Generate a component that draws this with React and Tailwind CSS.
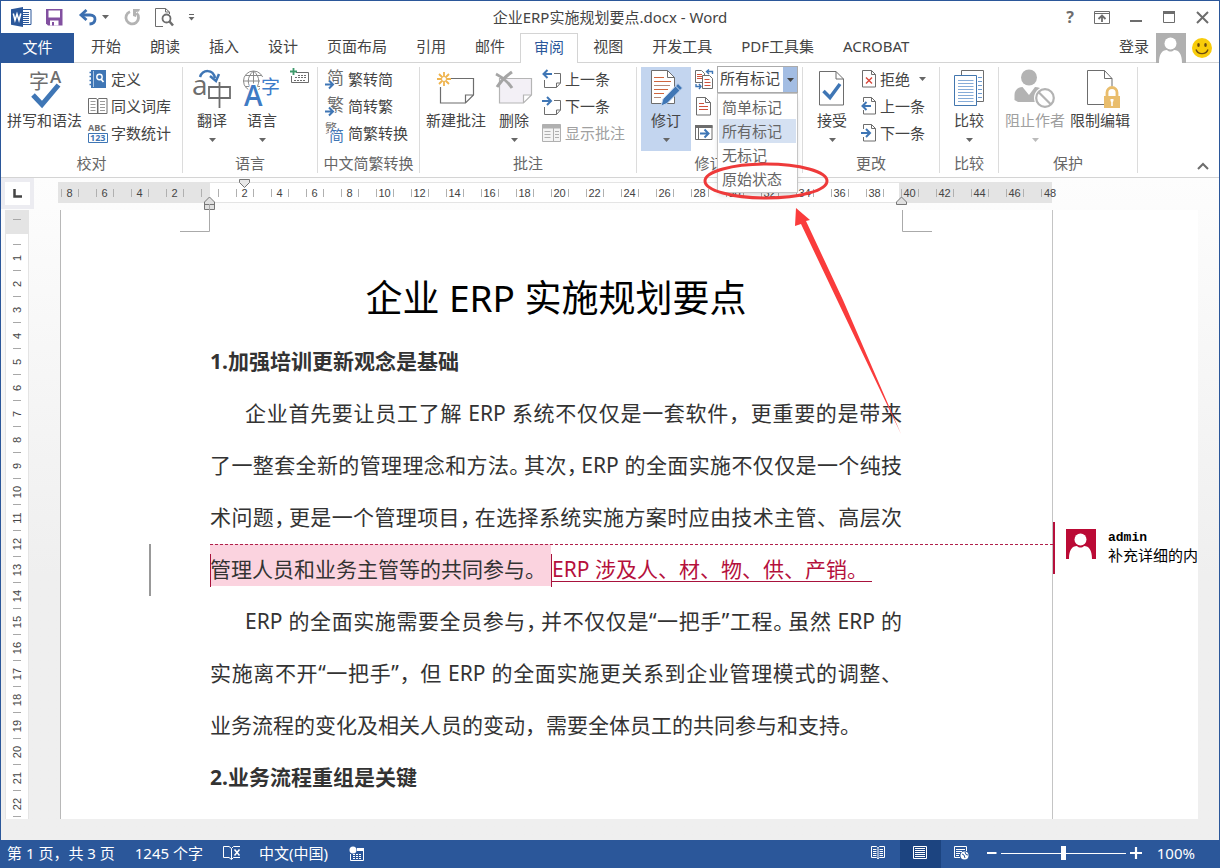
import React, { useState } from "react";

const GRAY = "#6d6d6d";
const BLUE = "#3f76b5";
const SANS = "'Noto Sans','Noto Sans CJK SC',sans-serif";

function Svg({ w, h, children, className = "" }) {
  return (
    <svg width={w} height={h} viewBox={`0 0 ${w} ${h}`} fill="none" aria-hidden="true" className={`block shrink-0 overflow-visible ${className}`}>
      {children}
    </svg>
  );
}

function Caret({ color = "#666" }) {
  return (
    <Svg w={7} h={4}>
      <path d="M0 0h7L3.5 4z" fill={color} />
    </Svg>
  );
}

/* ---------- title bar icons ---------- */

const WordLogo = () => (
  <Svg w={21} h={20}>
    <path d="M11 2.5h9v15h-9" fill="#fff" stroke="#2b579a" />
    <path d="M12 5.500h6M12 7.500h6M12 9.500h6M12 11.500h6M12 13.500h6M12 15.500h6" stroke="#2b579a" />
    <path d="M0 2.3L12 0v20L0 17.7z" fill="#2b579a" />
    <path d="M2.3 6.500L4 13.300 6 7l2 6.300 1.800-6.800" stroke="#fff" strokeWidth="1.500" />
  </Svg>
);

const SaveIcon = () => (
  <Svg w={17} h={17}>
    <path d="M0 0h16.500v16.500H2L0 14.500z" fill="#8250a0" />
    <path d="M2.500 1.500h11.500v7H2.500z" fill="#fff" />
    <path d="M4 11.500h8.500v5H4z" fill="#fff" />
    <path d="M6 13h2v3.500H6z" fill="#8250a0" />
  </Svg>
);

const UndoIcon = () => (
  <Svg w={18} h={17}>
    <path d="M2 6h9c7 0 6.500 8.500-.5 9" stroke="#3c6fb0" strokeWidth="2.800" />
    <path d="M7.500 1L2 6l5.500 5" stroke="#3c6fb0" strokeWidth="2.800" />
  </Svg>
);

const RedoIcon = () => (
  <Svg w={17} h={17}>
    <path d="M6 2.700A6.300 6.300 0 1 0 12.500 4" stroke="#b3b3b3" strokeWidth="2.800" />
    <path d="M9 0h7l-1 2.500-3 .5v5L9 7z" fill="#b3b3b3" />
  </Svg>
);

const PreviewIcon = () => (
  <Svg w={19} h={19}>
    <path d="M14.500 6V4l-4-3.500H.5v18H8M10.500.5V4h4" stroke={GRAY} />
    <circle cx="11.500" cy="10.500" r="4" stroke={GRAY} strokeWidth="1.800" />
    <path d="M14.500 13.500l3.500 4" stroke={GRAY} strokeWidth="2.500" />
  </Svg>
);

/* ---------- ribbon icons ---------- */

const SpellIcon = () => (
  <Svg w={36} h={40}>
    <text x="2" y="20" fontSize="20" fill={GRAY} fontFamily="'Noto Sans CJK SC'">字</text>
    <text x="23" y="14" fontSize="17" fontWeight="600" fill={GRAY} fontFamily="'Open Sans'">A</text>
    <path d="M6 26l9 9.500L31.500 16" stroke="#fff" strokeWidth="8" />
    <path d="M6 26l9 9.500L31.500 16" stroke={BLUE} strokeWidth="5" />
  </Svg>
);

const DefineIcon = () => (
  <Svg w={20} h={18}>
    <path d="M3 0h15v18H3z" fill={BLUE} />
    <path d="M5.500 1v16" stroke="#a9c4e4" />
    <path d="M1.500 2.500h3M1.500 6.500h3M1.500 10.500h3M1.500 14.500h3" stroke={BLUE} strokeWidth="1.500" />
    <circle cx="11.500" cy="7" r="2.700" stroke="#fff" strokeWidth="1.400" />
    <path d="M13 9l2.500 3" stroke="#fff" strokeWidth="1.800" />
  </Svg>
);

const ThesaurusIcon = () => (
  <Svg w={20} h={18}>
    <path d="M.5 1.500h7.500l1.500 1 1.500-1h8v15h-18.500z" stroke={GRAY} />
    <path d="M9.700 2.500v14" stroke={GRAY} strokeWidth="1.500" />
    <path d="M2.500 4.500h5M2.500 7.500h5M2.500 10.500h5M2.500 13.500h5M12 4.500h5M12 7.500h5M12 10.500h5M12 13.500h5" stroke="#9a9a9a" />
  </Svg>
);

const CountIcon = () => (
  <Svg w={20} h={20}>
    <text x="0" y="8" fontSize="9" fontWeight="700" fill={GRAY} fontFamily="'Open Sans'">ABC</text>
    <path d="M.5 10.500h19v9H.5z" stroke={BLUE} />
    <text x="2" y="18" fontSize="9" fontWeight="700" fill={BLUE} fontFamily="'Open Sans'">123</text>
  </Svg>
);

const TranslateIcon = () => (
  <Svg w={40} h={42}>
    <text x="0" y="27" fontSize="28" fill={GRAY} fontFamily="'Open Sans'">a</text>
    <path d="M17 19h21v11H17zM27.500 14v26" stroke={GRAY} strokeWidth="1.800" />
    <path d="M8 9c3-8 13-8 15 1" stroke={BLUE} strokeWidth="2.500" />
    <path d="M18 8l6 5 3-7" stroke={BLUE} strokeWidth="2.500" />
  </Svg>
);

const LanguageIcon = () => (
  <Svg w={38} h={40}>
    <circle cx="10.500" cy="12" r="10" stroke="#8a8a8a" />
    <path d="M.5 12h20M2.500 6.500h16M2.500 17.500h16M10.500 2v20M10.500 2c-7 6-7 14 0 20M10.500 2c7 6 7 14 0 20" stroke="#8a8a8a" />
    <path d="M17 8h21v18H17z" fill="#fff" />
    <text x="18" y="25" fontSize="19" fill="#3d7cc9" fontFamily="'Noto Sans CJK SC'">字</text>
    <text x="1" y="37" fontSize="28" fontWeight="600" fill="#3f7bc4" stroke="#fff" strokeWidth="3" paintOrder="stroke" fontFamily="'Open Sans'">A</text>
  </Svg>
);

const KeyboardIcon = () => (
  <Svg w={20} h={16}>
    <path d="M6 4.500h12.500v10H1.500V8" stroke={GRAY} />
    <path d="M4 12.500h12M5 9.500h12M8 7.500h9" stroke={GRAY} strokeDasharray="2 1" />
    <path d="M3.500 0v7M0 3.500h7" stroke="#3e9a6b" strokeWidth="1.800" />
  </Svg>
);

function HanIcon({ ch, both }) {
  return (
    <Svg w={20} h={20}>
      {both ? (
        <>
          <text x="0" y="10" fontSize="12" fill={GRAY} fontFamily="'Noto Sans CJK SC'">繁</text>
          <path d="M4 6h15v14H4z" fill="#fff" />
          <text x="4" y="18" fontSize="15" fill={BLUE} fontFamily="'Noto Sans CJK SC'">简</text>
        </>
      ) : (
        <>
          <text x="2" y="15" fontSize="17" fill={GRAY} fontFamily="'Noto Sans CJK SC'">{ch}</text>
          <path d="M0 15.500h7M4 11.500l4 4-4 4" stroke="#fff" strokeWidth="4" />
          <path d="M0 15.500h7M4 11.500l4 4-4 4" stroke={BLUE} strokeWidth="2" />
        </>
      )}
    </Svg>
  );
}

const NewCommentIcon = () => (
  <Svg w={38} h={34}>
    <path d="M14 6.500h22.500V23l-8 8H3.500V15M36 23h-7.500v8" stroke={GRAY} strokeWidth="1.200" />
    <path d="M7 0v14M0 7h14M2 2l10 10M12 2L2 12" stroke="#efb44e" strokeWidth="1.800" />
    <circle cx="7" cy="7" r="2.500" fill="#fff" stroke="#efb44e" />
  </Svg>
);

const DeleteCommentIcon = () => (
  <Svg w={38} h={34}>
    <path d="M4.500 6.500h32V23l-8 8h-24zM36.500 23h-8v8" fill="#f3f0f6" stroke="#b5b5b5" strokeWidth="1.200" />
    <path d="M1 2c6 3 12 8 16 14M17 0C11 4 6 9 2 15" stroke="#a5a5a5" strokeWidth="3" />
  </Svg>
);

function NoteArrowIcon({ next }) {
  return (
    <Svg w={20} h={20}>
      <path d="M12 4.500h6.500V14l-4 4.500H2.500V11M18.500 14h-4v4.500" stroke={GRAY} />
      <path d={next ? "M0 5h8M5 1l4 4-4 4" : "M10 5H2M5.500 1l-4 4 4 4"} stroke={BLUE} strokeWidth="2" />
    </Svg>
  );
}

const ShowCommentsIcon = () => (
  <Svg w={20} h={18}>
    <path d="M.5.5h18v17H.5z" fill="#f4f4f4" stroke="#b0b0b0" />
    <path d="M.5.5h18v4H.5z" fill="#b0b0b0" />
    <path d="M11.500 4v14M2.500 7.500h6M2.500 10.500h6M2.500 13.500h6M13 7.500h4M13 10.500h4M13 13.500h4" stroke="#b0b0b0" />
  </Svg>
);

const TrackIcon = () => (
  <Svg w={34} h={38}>
    <path d="M2.500.5h16l7 7v26h-23z" fill="#fff" stroke={GRAY} />
    <path d="M18.500.5v7h7" stroke={GRAY} />
    <path d="M5 7.500h10M5 11.500h17M5 19.500h14M5 23.500h10" stroke="#d0643c" />
    <path d="M5 15.500h16M5 27.500h7" stroke="#b58a78" />
    <path d="M12 36l2-7L29 13.500l4.500 4.500L18 33.500z" fill={BLUE} stroke="#c3d5ef" />
    <path d="M26.500 16l5 5" stroke="#c3d5ef" />
  </Svg>
);

const DisplayReviewIcon = () => (
  <Svg w={20} h={20}>
    <path d="M1.500 1.500h6l3 3v9h-9z" stroke={GRAY} />
    <path d="M3 5.500h5M3 7.500h5M3 9.500h5" stroke="#d0523c" />
    <path d="M8.500 6.500h7l3 3v10h-10z" fill="#fff" stroke={GRAY} />
    <path d="M10.500 10.500h5M10.500 13.500h6M10.500 16.500h6" stroke="#d0523c" />
    <path d="M18.500 5V2.500H13M15 .5l-2.500 2L15 5M2 15v2.500h5M5 15l2 2.500L5 20" stroke={BLUE} strokeWidth="1.400" />
  </Svg>
);

const ShowMarkupIcon = () => (
  <Svg w={20} h={20}>
    <path d="M2.500 1.500h9l5 5v12.500h-14zM11.500 1.500v5h5" stroke={GRAY} />
    <path d="M5 7.500h5M5 10.500h9M5 13.500h9" stroke="#d0523c" />
  </Svg>
);

const ReviewPaneIcon = () => (
  <Svg w={20} h={20}>
    <path d="M1.500 2.500h16.500v14H1.500z" stroke={GRAY} />
    <path d="M1 2h17.500v3H1z" fill={GRAY} />
    <path d="M4.500 5v11" stroke={GRAY} />
    <path d="M6 10.500h8M10.500 6.500l4 4-4 4" stroke={BLUE} strokeWidth="2" />
  </Svg>
);

const AcceptIcon = () => (
  <Svg w={26} h={36}>
    <path d="M.5.500h16.500l7.500 7.500v26H.5zM17 .5V8h7.500" stroke={GRAY} />
    <path d="M4.500 20l6.500 6.500L21 13" stroke={BLUE} strokeWidth="3.500" />
  </Svg>
);

const RejectIcon = () => (
  <Svg w={16} h={18}>
    <path d="M1.500.5h9l4 4V17h-13zM10.500.5v4h4" stroke={GRAY} />
    <path d="M5 7.500l6 6M11 7.500l-6 6" stroke="#d9463a" strokeWidth="1.400" />
  </Svg>
);

function DocArrowIcon({ next }) {
  return (
    <Svg w={16} h={18}>
      <path d="M2.500 5V.5h8l4 4V17h-12v-4M10.500.5v4h4" stroke={GRAY} />
      <path d={next ? "M0 9h8M5 5l4 4-4 4" : "M10 9H2M5.500 5l-4 4 4 4"} stroke={BLUE} strokeWidth="2" />
    </Svg>
  );
}

const CompareIcon = () => (
  <Svg w={32} h={38}>
    <path d="M8.500 6V.5h22V31.500h-7" stroke={GRAY} />
    <path d="M25 7.500h4M25 11.500h4M25 15.500h4M25 19.500h4M25 23.500h4M25 27.500h4" stroke="#6d9bd0" />
    <path d="M1.500 5.500H23.500v30H1.500z" fill="#fff" stroke="#4276ae" />
    <path d="M5 10.500h15.500M5 13.500h15.500M5 16.500h15.500M5 19.500h15.500M5 22.500h15.500M5 25.500h15.500M5 28.500h15.500M5 31.500h15.500" stroke="#86acd8" />
  </Svg>
);

const BlockIcon = () => (
  <Svg w={42} h={40}>
    <circle cx="15" cy="8.500" r="8" fill="#b3b3b3" />
    <path d="M.5 31v-5c0-5 4-8 8-8l6.500 8 6-8c3 0 6 1 7 3L22 33H4z" fill="#b3b3b3" />
    <circle cx="31" cy="29" r="11" fill="#fff" />
    <circle cx="31" cy="29" r="8.800" stroke="#b3b3b3" strokeWidth="2.200" />
    <path d="M24.500 23l12.500 12.500" stroke="#b3b3b3" strokeWidth="2.200" />
  </Svg>
);

const RestrictIcon = () => (
  <Svg w={34} h={38} className="ml-2">
    <path d="M17 34.500H.5V.5h17l7.500 8v8M17.500.5v8H25" stroke={GRAY} />
    <path d="M20 27v-4.500a5 5 0 0 1 10 0V27" stroke="#e9bd6c" strokeWidth="2.800" />
    <path d="M17 26h16v12H17z" fill="#e9bd6c" />
    <path d="M23.500 29h3v2l-.7 1v4h-1.600v-4l-.7-1z" fill="#fff" />
  </Svg>
);

/* ---------- ribbon parts ---------- */

function BigButton({ icon, label, caret, disabled, active, className }) {
  return (
    <button
      type="button"
      disabled={disabled}
      className={`flex h-[84px] shrink-0 flex-col items-center ${active ? "bg-[#c3d5ef]" : ""} ${disabled ? "text-[#a0a0a0]" : "text-[#444]"} ${className}`}
    >
      <span className="flex h-[43px] items-center">{icon}</span>
      <span className="whitespace-nowrap text-[15px] leading-5">{label}</span>
      {caret && (
        <span className="mt-2">
          <Caret color={disabled ? "#bbb" : "#666"} />
        </span>
      )}
    </button>
  );
}

function SmallButton({ icon, label, disabled, caret }) {
  return (
    <button
      type="button"
      disabled={disabled}
      className={`flex h-[27px] items-center gap-[3px] whitespace-nowrap text-[15px] leading-5 ${disabled ? "text-[#a0a0a0]" : "text-[#444]"}`}
    >
      {icon}
      <span>{label}</span>
      {caret && (
        <span className="ml-[6px]">
          <Caret />
        </span>
      )}
    </button>
  );
}

function Group({ label, children, className, labelClass = "" }) {
  return (
    <section aria-label={label} className={`my-1 flex shrink-0 flex-col border-r border-[#dcdcdc] ${className}`}>
      <div className="flex h-[87px] items-start">{children}</div>
      <h2 className={`text-center text-[15px] leading-5 text-[#666] ${labelClass}`}>{label}</h2>
    </section>
  );
}

const Col = ({ children, className = "" }) => <div className={`-mt-[2px] flex flex-col ${className}`}>{children}</div>;

const MARKUP = ["简单标记", "所有标记", "无标记", "原始状态"];

function MarkupPicker() {
  const [value, setValue] = useState("所有标记");
  return (
    <div className="relative -mt-px ml-[3px] w-[81px]">
      <select
        aria-label="显示以供审阅"
        value={value}
        onChange={(e) => setValue(e.target.value)}
        className="block h-[27px] w-full appearance-none border border-[#ababab] bg-white pb-1 pl-[2px] text-[15px] leading-5 text-[#444] outline-none"
      >
        {MARKUP.map((m) => (
          <option key={m}>{m}</option>
        ))}
      </select>
      <span className="pointer-events-none absolute top-px right-px flex h-[25px] w-[14px] items-center justify-center bg-[#a3bde3]">
        <Caret color="#444" />
      </span>
      <ul role="listbox" aria-label="标记" className="absolute top-full left-0 z-20 w-full border border-[#c6c6c6] bg-white p-px shadow-md">
        {MARKUP.map((m) => (
          <li key={m} role="option" aria-selected={m === value}>
            <button
              type="button"
              onClick={() => setValue(m)}
              className={`block h-6 w-full pb-px pl-[3px] text-left text-[15px] leading-[22px] text-[#666] ${m === value ? "bg-[#d5e1f2]" : ""}`}
            >
              {m}
            </button>
          </li>
        ))}
      </ul>
    </div>
  );
}

function Person({ bg }) {
  return (
    <Svg w={30} h={30}>
      <path d="M0 0h30v30H0z" fill={bg} />
      <circle cx="14.500" cy="10.500" r="6" fill="#fff" />
      <path d="M3 30c0-9 3-13 8-13 2 2 5 2 7 0 5 0 8 4 8 13z" fill="#fff" />
    </Svg>
  );
}

function TitleBar() {
  return (
    <header className="grid h-8 grid-cols-[1fr_auto_1fr] items-center text-[#444]">
      <div className="flex items-center pl-[10px]">
        <WordLogo />
        <button type="button" aria-label="保存" className="ml-[14px]"><SaveIcon /></button>
        <button type="button" aria-label="撤消" className="ml-4"><UndoIcon /></button>
        <button type="button" aria-label="撤消列表" className="ml-[5px]"><Caret /></button>
        <button type="button" aria-label="重复" className="ml-[15px]"><RedoIcon /></button>
        <button type="button" aria-label="打印预览" className="ml-[14px]"><PreviewIcon /></button>
        <button type="button" aria-label="自定义快速访问工具栏" className="ml-[14px]">
          <Svg w={7} h={7}><path d="M1 .5h5" stroke="#666" /><path d="M.5 3h6l-3 3.500z" fill="#666" /></Svg>
        </button>
      </div>
      <h1 className="pb-px text-[15px] leading-5">企业ERP实施规划要点.docx - Word</h1>
      <div className="flex items-center justify-end gap-5 pr-[10px]">
        <button type="button" aria-label="帮助" className="text-[16px] leading-5 font-bold text-[#6d6d6d]">?</button>
        <button type="button" aria-label="功能区显示选项">
          <Svg w={16} h={13}><path d="M.5.5h15v12H.5zM.5 2.500h15" stroke={GRAY} /><path d="M8 11V5M4.500 8L8 4.500 11.500 8" stroke={GRAY} strokeWidth="1.800" /></Svg>
        </button>
        <button type="button" aria-label="最小化"><Svg w={13} h={13}><path d="M0 10h12" stroke={GRAY} strokeWidth="2" /></Svg></button>
        <button type="button" aria-label="最大化"><Svg w={13} h={13}><path d="M.5.5h11v11H.5z" stroke={GRAY} /><path d="M0 1.500h12" stroke={GRAY} strokeWidth="3" /></Svg></button>
        <button type="button" aria-label="关闭"><Svg w={13} h={13}><path d="M1 1l11 11M12 1L1 12" stroke={GRAY} strokeWidth="2" /></Svg></button>
      </div>
    </header>
  );
}

const TABS = ["开始", "朗读", "插入", "设计", "页面布局", "引用", "邮件", "审阅", "视图", "开发工具", "PDF工具集", "ACROBAT"];

function Tabs() {
  return (
    <nav className="flex h-[30px] items-stretch border-b border-[#d4d4d4] text-[15px] text-[#444]">
      <button type="button" className="-mb-px w-[73px] bg-[#2b579a] pb-[2px] text-white">文件</button>
      <div className="ml-[3px] flex gap-px">
        {TABS.map((t) => (
          <button
            key={t}
            type="button"
            className={`px-[13px] pb-1 leading-6 whitespace-nowrap ${t === "审阅" ? "-mb-px border border-b-0 border-[#d4d4d4] bg-white text-[#2b579a]" : "border border-transparent"}`}
          >
            {t}
          </button>
        ))}
      </div>
      <div className="ml-auto flex items-center">
        <a href="#login" className="mr-[7px] pb-[2px]">登录</a>
        <Person bg="#b0b0b0" />
        <button type="button" aria-label="反馈" className="mr-[7px] ml-[6px]">
          <Svg w={20} h={20}>
            <circle cx="10" cy="10" r="10" fill="#f8cc0a" />
            <ellipse cx="6.500" cy="7" rx="1.300" ry="2" fill="#6b4a12" />
            <ellipse cx="13.500" cy="7" rx="1.300" ry="2" fill="#6b4a12" />
            <path d="M4 11.500c2 5.500 10 5.500 12 0" stroke="#6b4a12" strokeWidth="1.400" />
          </Svg>
        </button>
      </div>
    </nav>
  );
}

function Ribbon() {
  return (
    <div className="flex h-[115px] border-b border-[#d4d4d4]">
      <Group label="校对" className="w-[182px]">
        <BigButton icon={<SpellIcon />} label="拼写和语法" className="ml-[6px] w-[75px]" />
        <Col className="ml-[6px]">
          <SmallButton icon={<DefineIcon />} label="定义" />
          <SmallButton icon={<ThesaurusIcon />} label="同义词库" />
          <SmallButton icon={<CountIcon />} label="字数统计" />
        </Col>
      </Group>
      <Group label="语言" className="w-[135px]">
        <BigButton icon={<TranslateIcon />} label="翻译" caret className="ml-[9px] w-10" />
        <BigButton icon={<LanguageIcon />} label="语言" caret className="ml-[10px] w-10" />
        <button type="button" aria-label="更新输入法词典" className="mt-px ml-2"><KeyboardIcon /></button>
      </Group>
      <Group label="中文简繁转换" className="w-[102px]">
        <Col className="ml-[7px]">
          <SmallButton icon={<HanIcon ch="简" />} label="繁转简" />
          <SmallButton icon={<HanIcon ch="繁" />} label="简转繁" />
          <SmallButton icon={<HanIcon both />} label="简繁转换" />
        </Col>
      </Group>
      <Group label="批注" className="w-[217px]">
        <BigButton icon={<NewCommentIcon />} label="新建批注" className="ml-[6px] w-[60px]" />
        <BigButton icon={<DeleteCommentIcon />} label="删除" caret className="ml-2 w-10" />
        <Col className="ml-2">
          <SmallButton icon={<NoteArrowIcon />} label="上一条" />
          <SmallButton icon={<NoteArrowIcon next />} label="下一条" />
          <SmallButton icon={<ShowCommentsIcon />} label="显示批注" disabled />
        </Col>
      </Group>
      <Group label="修订" className="w-[166px]" labelClass="pr-5">
        <BigButton icon={<TrackIcon />} label="修订" caret active className="ml-1 w-[50px]" />
        <Col className="ml-[3px]">
          <button type="button" aria-label="显示以供审阅选项" className="flex h-[27px] items-center"><DisplayReviewIcon /></button>
          <button type="button" aria-label="显示标记" className="flex h-[27px] items-center"><ShowMarkupIcon /></button>
          <button type="button" aria-label="审阅窗格" className="flex h-[27px] items-center"><ReviewPaneIcon /></button>
        </Col>
        <MarkupPicker />
      </Group>
      <Group label="更改" className="w-[137px]">
        <BigButton icon={<AcceptIcon />} label="接受" caret className="ml-[9px] w-10" />
        <Col className="ml-[9px]">
          <SmallButton icon={<RejectIcon />} label="拒绝" caret />
          <SmallButton icon={<DocArrowIcon />} label="上一条" />
          <SmallButton icon={<DocArrowIcon next />} label="下一条" />
        </Col>
      </Group>
      <Group label="比较" className="w-[59px]">
        <BigButton icon={<CompareIcon />} label="比较" caret className="ml-[9px] w-10" />
      </Group>
      <Group label="保护" className="w-[139px]">
        <BigButton icon={<BlockIcon />} label="阻止作者" caret disabled className="ml-[6px] w-[60px]" />
        <BigButton icon={<RestrictIcon />} label="限制编辑" className="ml-[5px] w-[60px]" />
      </Group>
      <button type="button" aria-label="折叠功能区" className="mr-[10px] mb-[6px] ml-auto self-end">
        <Svg w={12} h={10}><path d="M1 8l5-5 5 5" stroke={GRAY} strokeWidth="2" /></Svg>
      </button>
    </div>
  );
}

const H_MARKS = [8, 6, 4, 2, "", ...Array.from({ length: 24 }, (_, i) => (i + 1) * 2)];
const V_MARKS = Array.from({ length: 22 }, (_, i) => i + 1);

function HorizontalRuler() {
  return (
    <div className="flex h-8 items-start">
      <button type="button" aria-label="制表符" className="flex h-[31px] w-[33px] shrink-0 items-center justify-center border-4 border-[#ececf1] bg-white">
        <Svg w={9} h={9}><path d="M1.500 0v7.500H9" stroke="#444" strokeWidth="2.500" /></Svg>
      </button>
      <div className="relative mt-1 ml-[18px] h-[21px] text-[11px] text-[#444]" style={{ fontFamily: "'Liberation Sans',sans-serif" }}>
        <div className="absolute inset-0 flex pl-[6px]">
          <span className="w-[152px] bg-[#e4e4e4]" />
          <span className="w-[689px] border-y border-[#e4e4e4] bg-white" />
          <span className="w-[153px] bg-[#e4e4e4]" />
        </div>
        <div className="relative flex h-[21px] items-center pt-px">
          {H_MARKS.map((n, i) => (
            <span key={i} className="flex w-[35px] shrink-0 justify-center">
              <span className={`flex h-2 w-[18px] items-center justify-center border-l border-[#b0b0b0] ${n === 48 ? "" : "border-r"}`}>{n}</span>
            </span>
          ))}
        </div>
        <Svg w={12} h={9} className="absolute -top-[3px] left-[187px]"><path d="M.5.5h10v3l-5 5-5-5z" fill="#e8e8e8" stroke="#777" /></Svg>
        <Svg w={12} h={16} className="absolute top-[14px] left-[152px]"><path d="M.5 6l5-5 5 5v7.500H.5zM.5 8.500h10" fill="#e0e0e0" stroke="#777" /></Svg>
        <Svg w={12} h={10} className="absolute top-[14px] left-[844px]"><path d="M.5 6l5-5 5 5v2.500H.5z" fill="#e0e0e0" stroke="#777" /></Svg>
      </div>
    </div>
  );
}

function VerticalRuler() {
  return (
    <div className="ml-1 flex w-6 shrink-0 flex-col items-center self-stretch border-x border-[#e4e4e4] bg-white text-[11px] text-[#444]" style={{ fontFamily: "'Liberation Sans',sans-serif" }}>
      <span className="flex h-[24px] w-full items-start justify-center bg-[#e4e4e4] pt-[9px]"><i className="h-px w-2 bg-[#a8a8a8]" /></span>
      <span className="h-[10px]" />
      {V_MARKS.map((n) => (
        <span key={n} className="flex h-[26px] flex-col items-center">
          <i className="h-px w-2 bg-[#a8a8a8]" />
          <span className="flex h-[25px] items-center">
            <span className="-rotate-90 leading-3">{n}</span>
          </span>
        </span>
      ))}
      <i className="h-px w-2 bg-[#a8a8a8]" />
    </div>
  );
}

/* Half-width punctuation followed by a thin space. */
const Half = ({ children }) => <span className="[font-feature-settings:'halt']">{children}{"\u2009"}</span>;
const Line = ({ children, className = "" }) => <span className={`block text-justify [text-align-last:justify] ${className}`}>{children}</span>;

function DocumentPage() {
  return (
    <article className="relative w-[992px] shrink-0 border-l border-[#b8b8b8] bg-white pt-[51px] pb-4 pl-[149px]">
      <Svg w={31} h={28} className="absolute -top-[6px] left-[119px]"><path d="M29.500 0v27.500H0" stroke="#aaa" /></Svg>
      <Svg w={31} h={22} className="absolute top-0 left-[841px]"><path d="M.5 0v21.500H30" stroke="#aaa" /></Svg>
      <div className="w-[692px] text-[21px] leading-[52px] text-[#333]">
        <h2 className="text-center text-[37px] leading-[74px] text-black">企业 ERP 实施规划要点</h2>
        <h3 className="font-bold">1.加强培训更新观念是基础</h3>
        <p>
          <Line className="pl-[35px]">企业首先要让员工了解 ERP 系统不仅仅是一套软件，更重要的是带来</Line>
          <Line>了一整套全新的管理理念和方法<Half>。</Half>其次<Half>，</Half>ERP 的全面实施不仅仅是一个纯技</Line>
          <Line>术问题<Half>，</Half>更是一个管理项目<Half>，</Half>在选择系统实施方案时应由技术主管、高层次</Line>
          <span className="relative flex h-[52px] items-start pt-px leading-[50px] whitespace-nowrap">
            <i className="absolute top-px -left-[61px] h-[52px] w-[2px] bg-[#999]" />
            <i className="absolute top-px left-0 w-[843px] border-t border-dashed border-[#b0204a]" />
            <mark className="h-[42px] w-[341px] bg-[#fbd3df] text-[#333]">管理人员和业务主管等的共同参与。</mark>
            <i className="absolute top-[11px] left-0 h-[33px] w-px bg-[#a8123c]" />
            <i className="absolute top-[11px] left-[341px] h-[33px] w-px bg-[#a8123c]" />
            <ins className="h-[38px] w-[321px] border-b border-[#a8123c] pl-px text-[#b5103c] no-underline">ERP 涉及人、材、物、供、产销。</ins>
          </span>
        </p>
        <p>
          <Line className="pl-[35px]">ERP 的全面实施需要全员参与<Half>，</Half>并不仅仅是“一把手”工程<Half>。</Half>虽然 ERP 的</Line>
          <Line>实施离不开“一把手”<Half>，</Half> 但 ERP 的全面实施更关系到企业管理模式的调整、</Line>
          <span className="block">业务流程的变化及相关人员的变动，需要全体员工的共同参与和支持。</span>
        </p>
        <h3 className="font-bold">2.业务流程重组是关键</h3>
      </div>
    </article>
  );
}

function CommentPane() {
  return (
    <aside className="flex-1 overflow-hidden border-l border-[#c4c4c4] bg-white pt-[312px]">
      <div className="-ml-px flex h-[52px] border-l-[3px] border-[#b5103c] pt-[7px] pl-[11px]">
        <Person bg="#bb0a35" />
        <div className="ml-3 whitespace-nowrap text-black">
          <p className="text-[13px] leading-[17px] font-bold" style={{ fontFamily: "'Liberation Mono',monospace" }}>admin</p>
          <p className="text-[15px] leading-[18px]">补充详细的内</p>
        </div>
      </div>
    </aside>
  );
}

function Annotation() {
  return (
    <Svg w={220} h={290} className="pointer-events-none absolute top-[155px] left-[695px] z-30">
      <ellipse cx="70" cy="25" rx="61" ry="17" stroke="#ee3a3a" strokeWidth="3" />
      <path d="M100 52l14 12-4 1 37 79 58 134-62-130-38-80-6 2z" fill="#fa3c3c" />
    </Svg>
  );
}

function StatusBar() {
  const [zoom, setZoom] = useState(50);
  return (
    <footer className="flex h-7 shrink-0 items-center bg-[#2b579a] text-[15px] leading-5 whitespace-nowrap text-white">
      <span className="ml-[6px] pb-[3px]">第 1 页，共 3 页</span>
      <span className="ml-5 pb-[3px]">1245 个字</span>
      <button type="button" aria-label="校对错误" className="ml-5 pb-[2px]">
        <Svg w={18} h={16}>
          <path d="M8.500 3.500v11L6 12.500H.5v-11H6zM8.500 3.500l2-2H17M8.500 14.500l2-2H17" stroke="#fff" />
          <path d="M11.500 4.500l5 6M16.500 4.500l-5 6" stroke="#fff" strokeWidth="1.500" />
        </Svg>
      </button>
      <button type="button" className="ml-[18px] pb-[3px]">中文(中国)</button>
      <button type="button" aria-label="宏录制" className="ml-[21px] pb-px">
        <Svg w={16} h={16}>
          <path d="M8 2.500h6.500v12H1.500V8" stroke="#fff" />
          <path d="M8 2h7v3H8z" fill="#fff" />
          <circle cx="4" cy="4" r="3.500" fill="#fff" />
          <path d="M4 8.500h9M4 10.500h9M4 12.500h9" stroke="#fff" strokeDasharray="2 1" />
        </Svg>
      </button>
      <div className="ml-auto flex h-full items-center">
        <button type="button" aria-label="阅读视图" className="mr-[14px] pb-[2px]">
          <Svg w={15} h={14}>
            <path d="M.5.500h5l1 1h1l1-1h5v11h-5l-1 1h-1l-1-1h-5zM7 2v11" stroke="#fff" />
            <path d="M2 3.500h3.500M2 5.500h3.500M2 7.500h3.500M2 9.500h3.500M8.500 3.500H12M8.500 5.500H12M8.500 7.500H12M8.500 9.500H12" stroke="#fff" />
          </Svg>
        </button>
        <button type="button" aria-label="页面视图" className="flex h-full w-[41px] items-center justify-center bg-[#1c4480] pb-[2px]">
          <Svg w={15} h={14}><path d="M.5.5h13v12H.5zM2 2.500h10M2 4.500h10M2 6.500h10M2 8.500h10M2 10.500h10" stroke="#fff" /></Svg>
        </button>
        <button type="button" aria-label="Web 版式视图" className="ml-[13px] pb-[2px]">
          <Svg w={15} h={14}>
            <path d="M6 11.500H.5V.5h12V5M2 3.500h9M2 5.500h6M2 7.500h4M2 9.500h3" stroke="#fff" />
            <circle cx="10.500" cy="9.500" r="4" fill="#fff" />
            <path d="M8 8l2 1 1 3M11 6l1 2.500 2 .5" stroke="#2b579a" />
          </Svg>
        </button>
        <button type="button" aria-label="缩小" className="ml-[18px] pb-[2px]"><Svg w={10} h={10}><path d="M0 5h9.500" stroke="#fff" strokeWidth="2" /></Svg></button>
        <input
          type="range"
          aria-label="显示比例"
          value={zoom}
          onChange={(e) => setZoom(e.target.value)}
          className="mx-[4px] mb-[2px] h-4 w-[125px] appearance-none bg-[linear-gradient(#fff,#fff)] bg-[length:100%_1px] bg-center bg-no-repeat [&::-webkit-slider-thumb]:h-[14px] [&::-webkit-slider-thumb]:w-[5px] [&::-webkit-slider-thumb]:appearance-none [&::-webkit-slider-thumb]:bg-white"
        />
        <button type="button" aria-label="放大" className="pb-[2px]"><Svg w={12} h={12}><path d="M0 6h12M6 0v12" stroke="#fff" strokeWidth="2.200" /></Svg></button>
        <button type="button" className="mr-[24px] ml-[15px] pb-[3px]">100%</button>
      </div>
    </footer>
  );
}

export default function App() {
  return (
    <div className="relative flex min-h-screen flex-col overflow-x-hidden border-x border-t border-[#2b579a] bg-white" style={{ fontFamily: SANS }}>
      <TitleBar />
      <Tabs />
      <Ribbon />
      <main className="flex flex-1 flex-col bg-linear-to-b from-[#fdfdfd] to-[#efefef] to-60% pb-[21px]">
        <HorizontalRuler />
        <div className="flex flex-1">
          <VerticalRuler />
          <div className="ml-[31px] flex flex-1 pr-[21px]">
            <DocumentPage />
            <CommentPane />
          </div>
        </div>
      </main>
      <StatusBar />
      <Annotation />
    </div>
  );
}
